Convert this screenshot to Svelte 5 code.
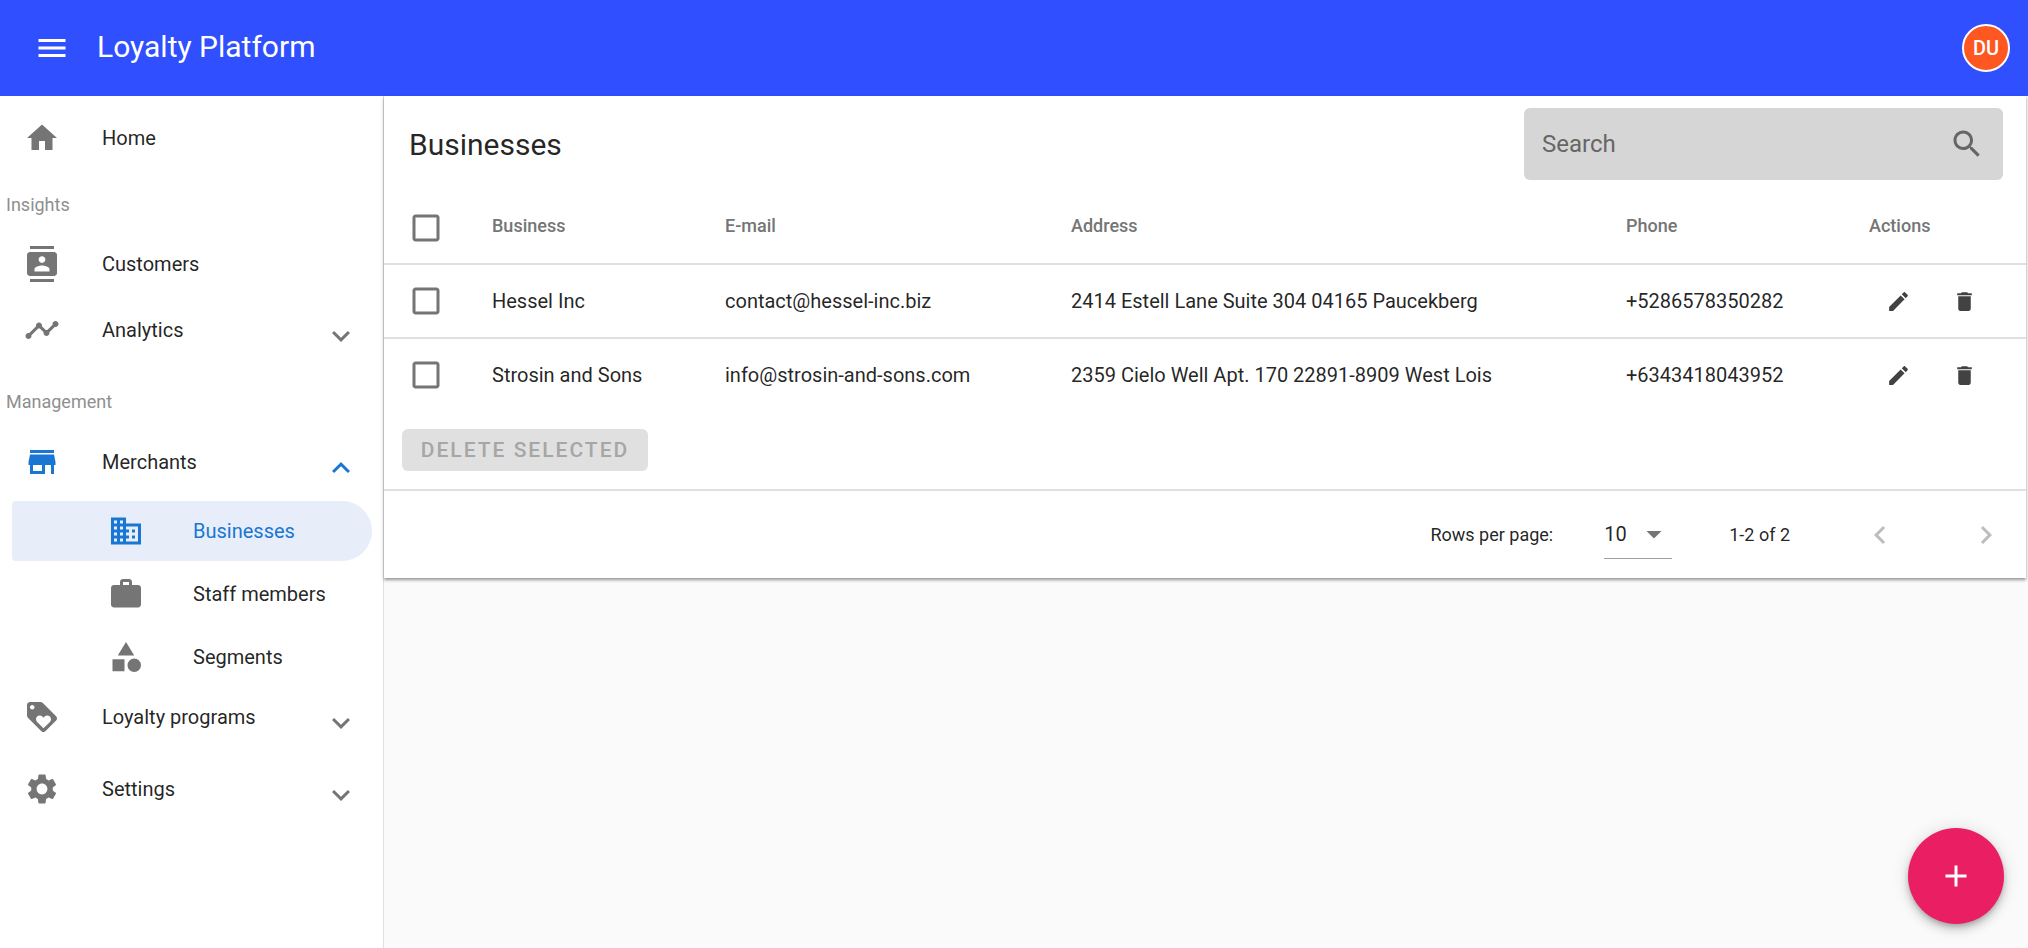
<script>
  // material icon paths
  const icons = {
    menu: 'M3 18h18v-2H3v2zm0-5h18v-2H3v2zm0-7v2h18V6H3z',
    home: 'M10 20v-6h4v6h5v-8h3L12 3 2 12h3v8z',
    contacts: 'M20 0H4v2h16V0zM4 24h16v-2H4v2zM20 4H4c-1.1 0-2 .9-2 2v12c0 1.1.9 2 2 2h16c1.1 0 2-.9 2-2V6c0-1.1-.9-2-2-2zm-8 2.75c1.24 0 2.25 1.01 2.25 2.25s-1.01 2.25-2.25 2.25S9.75 10.24 9.75 9 10.76 6.75 12 6.75zM17 17H7v-1.5c0-1.67 3.33-2.5 5-2.5s5 .83 5 2.5V17z',
    timeline: 'M23 8c0 1.1-.9 2-2 2-.18 0-.35-.02-.51-.07l-3.56 3.55c.05.16.07.34.07.52 0 1.1-.9 2-2 2s-2-.9-2-2c0-.18.02-.36.07-.52l-2.55-2.55c-.16.05-.34.07-.52.07s-.36-.02-.52-.07l-4.55 4.56c.05.16.07.33.07.51 0 1.1-.9 2-2 2s-2-.9-2-2 .9-2 2-2c.18 0 .35.02.51.07l4.56-4.55C8.02 9.36 8 9.18 8 9c0-1.1.9-2 2-2s2 .9 2 2c0 .18-.02.36-.07.52l2.55 2.55c.16-.05.34-.07.52-.07s.36.02.52.07l3.55-3.56C19.02 8.35 19 8.18 19 8c0-1.1.9-2 2-2s2 .9 2 2z',
    store: 'M20 4H4v2h16V4zm1 10v-2l-1-5H4l-1 5v2h1v6h10v-6h4v6h2v-6h1zm-9 4H6v-4h6v4z',
    domain: 'M12 7V3H2v18h20V7H12zM6 19H4v-2h2v2zm0-4H4v-2h2v2zm0-4H4V9h2v2zm0-4H4V5h2v2zm4 12H8v-2h2v2zm0-4H8v-2h2v2zm0-4H8V9h2v2zm0-4H8V5h2v2zm10 12h-8v-2h2v-2h-2v-2h2v-2h-2V9h8v10zm-2-8h-2v2h2v-2zm0 4h-2v2h2v-2z',
    work: 'M20 6h-4V4c0-1.11-.89-2-2-2h-4c-1.11 0-2 .89-2 2v2H4c-1.11 0-1.99.89-1.99 2L2 19c0 1.11.89 2 2 2h16c1.11 0 2-.89 2-2V8c0-1.11-.89-2-2-2zm-6 0h-4V4h4v2z',
    category: 'M12 2l-5.5 9h11zM17.5 13a4.5 4.5 0 1 0 0 9 4.5 4.5 0 1 0 0-9zM3 13.5h8v8H3z',
    loyalty: 'M21.41 11.58l-9-9C12.05 2.22 11.55 2 11 2H4c-1.1 0-2 .9-2 2v7c0 .55.22 1.05.59 1.42l9 9c.36.36.86.58 1.41.58.55 0 1.05-.22 1.41-.59l7-7c.37-.36.59-.86.59-1.41 0-.55-.23-1.06-.59-1.42zM5.5 7C4.67 7 4 6.33 4 5.5S4.67 4 5.5 4 7 4.67 7 5.5 6.33 7 5.5 7zm11.77 8.27L13 19.54l-4.27-4.27C8.28 14.81 8 14.19 8 13.5c0-1.38 1.12-2.5 2.5-2.5.69 0 1.32.28 1.77.74l.73.72.73-.73c.45-.45 1.08-.73 1.77-.73 1.38 0 2.5 1.12 2.5 2.5 0 .69-.28 1.32-.73 1.77z',
    settings: 'M19.14 12.94c.04-.3.06-.61.06-.94 0-.32-.02-.64-.07-.94l2.03-1.58c.18-.14.23-.41.12-.61l-1.92-3.32c-.12-.22-.37-.29-.59-.22l-2.39.96c-.5-.38-1.03-.7-1.62-.94l-.36-2.54c-.04-.24-.24-.41-.48-.41h-3.84c-.24 0-.43.17-.47.41l-.36 2.54c-.59.24-1.13.57-1.62.94l-2.39-.96c-.22-.08-.47 0-.59.22L2.74 8.87c-.12.21-.08.47.12.61l2.03 1.58c-.05.3-.09.63-.09.94s.02.64.07.94l-2.03 1.58c-.18.14-.23.41-.12.61l1.92 3.32c.12.22.37.29.59.22l2.39-.96c.5.38 1.03.7 1.62.94l.36 2.54c.05.24.24.41.48.41h3.84c.24 0 .44-.17.47-.41l.36-2.54c.59-.24 1.13-.56 1.62-.94l2.39.96c.22.08.47 0 .59-.22l1.92-3.32c.12-.22.07-.47-.12-.61l-2.01-1.58zM12 15.6c-1.98 0-3.6-1.62-3.6-3.6s1.62-3.6 3.6-3.6 3.6 1.62 3.6 3.6-1.62 3.6-3.6 3.6z',
    more: 'M16.59 8.59L12 13.17 7.41 8.59 6 10l6 6 6-6z',
    less: 'M12 8l-6 6 1.41 1.41L12 10.83l4.59 4.58L18 14z',
    search: 'M15.5 14h-.79l-.28-.27C15.41 12.59 16 11.11 16 9.5 16 5.91 13.09 3 9.5 3S3 5.91 3 9.5 5.91 16 9.5 16c1.61 0 3.09-.59 4.23-1.57l.27.28v.79l5 4.99L20.49 19l-4.99-5zm-6 0C7.01 14 5 11.99 5 9.5S7.01 5 9.5 5 14 7.01 14 9.5 11.99 14 9.5 14z',
    edit: 'M3 17.25V21h3.75L17.81 9.94l-3.75-3.75L3 17.25zM20.71 7.04c.39-.39.39-1.02 0-1.41l-2.34-2.34c-.39-.39-1.02-.39-1.41 0l-1.83 1.83 3.75 3.75 1.83-1.83z',
    trash: 'M6 19c0 1.1.9 2 2 2h8c1.1 0 2-.9 2-2V7H6v12zM19 4h-3.5l-1-1h-5l-1 1H5v2h14V4z',
    box: 'M19 5v14H5V5h14m0-2H5c-1.1 0-2 .9-2 2v14c0 1.1.9 2 2 2h14c1.1 0 2-.9 2-2V5c0-1.1-.9-2-2-2z',
    left: 'M15.41 7.41L14 6l-6 6 6 6 1.41-1.41L10.83 12z',
    right: 'M10 6L8.59 7.41 13.17 12l-4.58 4.59L10 18l6-6z',
    drop: 'M7 10l5 5 5-5z',
    add: 'M19 13h-6v6h-2v-6H5v-2h6V5h2v6h6v2z',
  };

  const rows = [
    { name: 'Hessel Inc', email: 'contact@hessel-inc.biz', address: '2414 Estell Lane Suite 304 04165 Paucekberg', phone: '+5286578350282' },
    { name: 'Strosin and Sons', email: 'info@strosin-and-sons.com', address: '2359 Cielo Well Apt. 170 22891-8909 West Lois', phone: '+6343418043952' },
  ];

  const subItems = [
    { label: 'Businesses', icon: 'domain', active: true },
    { label: 'Staff members', icon: 'work' },
    { label: 'Segments', icon: 'category' },
  ];
</script>

{#snippet icon(name, cls = '')}
  <svg class="icon {cls}" viewBox="0 0 24 24" aria-hidden="true"><path d={icons[name]} /></svg>
{/snippet}

{#snippet navRow(label, name, chevron, cls = '')}
  <div class="nav-row {cls}">
    <span class="nav-icon">{@render icon(name)}</span>
    <span class="nav-text">{label}</span>
    {#if chevron}
      <span class="chevron">{@render icon(chevron)}</span>
    {/if}
  </div>
{/snippet}

<div class="app">
  <header class="topbar">
    <button class="menu-btn">{@render icon('menu')}</button>
    <h1>Loyalty Platform</h1>
    <div class="avatar">DU</div>
  </header>

  <div class="body">
    <aside class="sidebar">
      {@render navRow('Home', 'home', null, 'home')}
      <div class="section">Insights</div>
      {@render navRow('Customers', 'contacts')}
      {@render navRow('Analytics', 'timeline', 'more')}
      <div class="section management">Management</div>
      {@render navRow('Merchants', 'store', 'less', 'open')}
      <div class="sub-list">
        {#each subItems as item}
          <div class="sub-row {item.active ? 'active' : ''}">
            <span class="sub-icon">{@render icon(item.icon)}</span>
            <span>{item.label}</span>
          </div>
        {/each}
      </div>
      {@render navRow('Loyalty programs', 'loyalty', 'more', 'loyalty')}
      {@render navRow('Settings', 'settings', 'more', 'settings')}
    </aside>

    <main class="content">
      <section class="card">
        <div class="toolbar">
          <h2>Businesses</h2>
          <div class="search">
            <span>Search</span>
            {@render icon('search')}
          </div>
        </div>

        <table>
          <colgroup>
            <col style="width: 108px" />
            <col style="width: 233px" />
            <col style="width: 346px" />
            <col style="width: 555px" />
            <col style="width: 239px" />
            <col />
          </colgroup>
          <thead>
            <tr>
              <th class="check">{@render icon('box')}</th>
              <th>Business</th>
              <th>E-mail</th>
              <th>Address</th>
              <th>Phone</th>
              <th class="actions-head">Actions</th>
            </tr>
          </thead>
          <tbody>
            {#each rows as row}
              <tr>
                <td class="check">{@render icon('box')}</td>
                <td>{row.name}</td>
                <td>{row.email}</td>
                <td>{row.address}</td>
                <td>{row.phone}</td>
                <td>
                  <div class="actions">
                    <span>{@render icon('edit')}</span>
                    <span>{@render icon('trash')}</span>
                  </div>
                </td>
              </tr>
            {/each}
          </tbody>
        </table>

        <div class="bulk">
          <button class="delete-btn" disabled>DELETE SELECTED</button>
        </div>

        <div class="pagination">
          <span class="rows-label">Rows per page:</span>
          <div class="select">
            <span>10</span>
            {@render icon('drop')}
          </div>
          <span class="count">1-2 of 2</span>
          <span class="page-btn">{@render icon('left')}</span>
          <span class="page-btn">{@render icon('right')}</span>
        </div>
      </section>
    </main>
  </div>

  <button class="fab">{@render icon('add')}</button>
</div>

<style>
  :global(body) {
    margin: 0;
    background: #fafafa;
  }

  .app {
    position: relative;
    height: 948px;
    overflow: hidden;
    font-family: Roboto, sans-serif;
    color: rgba(0, 0, 0, 0.87);
  }

  .icon {
    display: block;
    width: 36px;
    height: 36px;
    fill: currentColor;
  }

  button {
    border: none;
    padding: 0;
    background: none;
    font-family: inherit;
  }

  /* top bar */
  .topbar {
    display: flex;
    align-items: center;
    height: 96px;
    background: #304ffe;
    color: #fff;
    padding: 0 18px 0 34px;
  }

  .menu-btn {
    color: #fff;
    margin-right: 27px;
  }

  h1 {
    flex: 1;
    margin: 0 0 2px;
    font-size: 30px;
    font-weight: 400;
    line-height: 1;
  }

  .avatar {
    width: 44px;
    height: 44px;
    display: flex;
    align-items: center;
    justify-content: center;
    border: 2px solid #fff;
    border-radius: 50%;
    background: #ff5722;
    font-size: 20px;
    font-weight: 500;
  }

  .body {
    display: flex;
    height: 852px;
  }

  /* sidebar */
  .sidebar {
    flex: none;
    box-sizing: border-box;
    width: 384px;
    background: #fff;
    border-right: 1px solid #e0e0e0;
  }

  .nav-row {
    position: relative;
    display: flex;
    align-items: center;
    height: 66px;
    font-size: 20px;
  }

  .nav-row.home {
    height: 84px;
  }

  .nav-row.loyalty {
    height: 54px;
  }

  .nav-row.settings {
    margin-top: 12px;
  }

  .nav-icon {
    width: 36px;
    margin: 0 42px 0 24px;
    color: #757575;
  }

  .nav-text {
    flex: 1;
  }

  .chevron {
    margin: 12px 24px 0 0;
    color: #757575;
  }

  .open .nav-icon,
  .open .chevron {
    color: #1976d2;
  }

  .section {
    height: 51px;
    line-height: 50px;
    padding-left: 6px;
    font-size: 18px;
    color: #8f8f8f;
  }

  .section.management {
    height: 66px;
    line-height: 78px;
  }

  .sub-list {
    padding-bottom: 0;
    margin-top: 6px;
  }

  .sub-row {
    display: flex;
    align-items: center;
    box-sizing: border-box;
    height: 60px;
    margin: 3px 11px 3px 12px;
    padding-left: 96px;
    font-size: 20px;
    border-radius: 4px 30px 30px 4px;
  }

  .sub-icon {
    width: 36px;
    margin-right: 49px;
    color: #757575;
  }

  .sub-row.active {
    background: #e7eef9;
    color: #1976d2;
  }

  .sub-row.active .sub-icon {
    color: #1976d2;
  }

  /* main card */
  .content {
    flex: 1;
    min-width: 0;
    padding-right: 2px;
  }

  .card {
    background: #fff;
    box-shadow: 0 2px 3px rgba(0, 0, 0, 0.4);
  }

  .toolbar {
    display: flex;
    align-items: center;
    justify-content: space-between;
    padding: 12px 23px 12px 25px;
  }

  h2 {
    margin: 0;
    font-size: 30px;
    font-weight: 400;
  }

  .search {
    display: flex;
    align-items: center;
    justify-content: space-between;
    box-sizing: border-box;
    width: 479px;
    height: 72px;
    padding: 0 18px;
    background: #d6d6d6;
    border-radius: 6px;
    color: #666;
    font-size: 24px;
  }

  table {
    width: 100%;
    table-layout: fixed;
    border-collapse: collapse;
  }

  th,
  td {
    padding: 0;
    text-align: left;
    white-space: nowrap;
  }

  th {
    height: 72px;
    padding-bottom: 4px;
    box-sizing: border-box;
    font-size: 18px;
    font-weight: 500;
    color: #757575;
    border-bottom: 2px solid #e0e0e0;
  }

  td {
    height: 72px;
    font-size: 20px;
  }

  tbody tr:first-child td {
    border-bottom: 2px solid #e0e0e0;
  }

  .check {
    padding-left: 24px;
    padding-bottom: 0;
    color: #757575;
  }

  .actions-head {
    padding-left: 4px;
  }

  .actions {
    display: flex;
    color: #424242;
  }

  .actions span {
    display: flex;
    justify-content: center;
    width: 66px;
  }

  .actions .icon {
    width: 25px;
    height: 25px;
  }

  .bulk {
    padding: 18px;
    border-bottom: 2px solid #e0e0e0;
  }

  .delete-btn {
    display: block;
    width: 246px;
    height: 42px;
    background: #e0e0e0;
    border-radius: 6px;
    color: #a6a6a6;
    font-size: 21px;
    font-weight: 500;
    letter-spacing: 2px;
  }

  .pagination {
    display: flex;
    align-items: center;
    justify-content: flex-end;
    height: 87px;
    padding-right: 22px;
    font-size: 18px;
  }

  .rows-label {
    margin-right: 51px;
  }

  .select {
    position: relative;
    display: flex;
    align-items: center;
    justify-content: space-between;
    box-sizing: border-box;
    width: 68px;
    height: 48px;
    border-bottom: 1px solid #9e9e9e;
    margin-top: 0;
    font-size: 20px;
    color: rgba(0, 0, 0, 0.87);
  }

  .select .icon {
    color: #757575;
    margin-right: 0;
  }

  .count {
    margin: 0 72px 0 57px;
  }

  .page-btn {
    color: #bdbdbd;
  }

  .page-btn + .page-btn {
    margin-left: 70px;
  }

  .fab {
    position: absolute;
    left: 1908px;
    top: 828px;
    display: flex;
    align-items: center;
    justify-content: center;
    width: 96px;
    height: 96px;
    border-radius: 50%;
    background: #e91e63;
    color: #fff;
    box-shadow: 0 3px 5px -1px rgba(0, 0, 0, 0.2), 0 6px 10px 0 rgba(0, 0, 0, 0.14), 0 1px 18px 0 rgba(0, 0, 0, 0.12);
  }
</style>
